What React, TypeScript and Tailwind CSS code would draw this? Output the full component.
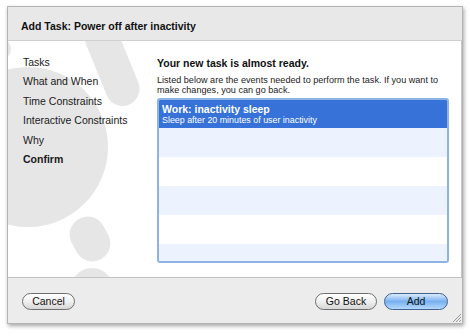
const sideItems = [
  { label: "Tasks", current: false },
  { label: "What and When", current: false },
  { label: "Time Constraints", current: false },
  { label: "Interactive Constraints", current: false },
  { label: "Why", current: false },
  { label: "Confirm", current: true },
];

const stripes = ["bg-[#edf3fe]", "bg-white", "bg-[#edf3fe]", "bg-white", "bg-[#edf3fe]"];

const Watermark = () => (
  <svg
    className="pointer-events-none absolute left-0 top-0"
    width="150"
    height="236"
    viewBox="8 41 150 236"
  >
    <g fill="#e6e6e6">
      <circle cx="28" cy="147" r="80" />
      <rect x="95" y="18" width="34" height="90" rx="17" transform="rotate(-22 112 63)" />
      <ellipse cx="-2" cy="49" rx="13" ry="12" />
      <rect x="72" y="216" width="36" height="46" rx="18" transform="rotate(-28 90 239)" />
      <circle cx="92" cy="289" r="21" />
    </g>
  </svg>
);

const AquaButton = ({ label, primary, w }: { label: string; primary?: boolean; w: string }) => (
  <button
    className={`${w} h-[17px] rounded-full border text-[10.5px] leading-none text-[#111] ${
      primary
        ? "border-[#41618f] bg-gradient-to-b from-[#dcebfc] via-[#78b1ef] to-[#b5d9fb]"
        : "border-[#6f6f6f] bg-gradient-to-b from-white via-[#f0f0f0] to-[#d6d6d6]"
    }`}
  >
    {label}
  </button>
);

export default function App() {
  return (
    <div className="h-[336px] w-[470px] bg-white pl-[7px] pt-[6px] font-['Liberation_Sans',Arial,sans-serif] text-black">
      <div className="relative flex h-[318px] w-[456px] flex-col border border-[#b4b4b4] shadow-[1px_2px_4px_rgba(0,0,0,0.35)]">
        {/* title bar */}
        <div className="flex h-[34px] items-end border-b border-[#cfcfcf] bg-[#e8e8e8] pb-[5px] pl-[13px]">
          <h1 className="text-[10.5px] font-bold text-[#111]">Add Task: Power off after inactivity</h1>
        </div>

        {/* body */}
        <div className="relative flex h-[236px] border-r border-[#c4c4c4] bg-white">
          <Watermark />
          <ul className="relative flex w-[149px] flex-col pl-[15px] pt-[12px]">
            {sideItems.map((item) => (
              <li
                key={item.label}
                className={`flex h-[19.5px] items-center text-[10.5px] text-[#1a1a1a] ${item.current ? "font-bold" : ""}`}
              >
                {item.label}
              </li>
            ))}
          </ul>

          <div className="relative flex flex-1 flex-col pr-[12px] pt-[15px]">
            <h2 className="text-[10.5px] font-bold leading-[14px] text-[#111]">Your new task is almost ready.</h2>
            <p className="mt-[5px] text-[9.1px] leading-[10px] text-[#222]">
              Listed below are the events needed to perform the task. If you want to make changes, you can go back.
            </p>
            <div className="mt-[3px] h-[165px] overflow-hidden rounded-[3px] border-2 border-[#8db3e3]">
              <div className="flex h-[28px] flex-col justify-center bg-[#3672d8] pl-[3px] text-white">
                <div className="text-[10.5px] font-bold leading-[12px]">Work: inactivity sleep</div>
                <div className="text-[8.9px] leading-[11px]">Sleep after 20 minutes of user inactivity</div>
              </div>
              {stripes.map((bg, i) => (
                <div key={i} className={`h-[29px] ${bg}`} />
              ))}
            </div>
          </div>
        </div>

        {/* footer */}
        <div className="flex flex-1 items-center justify-between border-t border-[#c2c2c2] bg-[#ececec] px-[14px] pt-[2px]">
          <AquaButton label="Cancel" w="w-[53px]" />
          <div className="flex gap-[7px]">
            <AquaButton label="Go Back" w="w-[62px]" />
            <AquaButton label="Add" w="w-[64px]" primary />
          </div>
        </div>

        <svg className="absolute bottom-[1px] right-[1px]" width="9" height="9" viewBox="0 0 9 9">
          <g stroke="#9a9a9a" strokeWidth="1">
            <line x1="1" y1="9" x2="9" y2="1" />
            <line x1="4" y1="9" x2="9" y2="4" />
            <line x1="7" y1="9" x2="9" y2="7" />
          </g>
        </svg>
      </div>
    </div>
  );
}
